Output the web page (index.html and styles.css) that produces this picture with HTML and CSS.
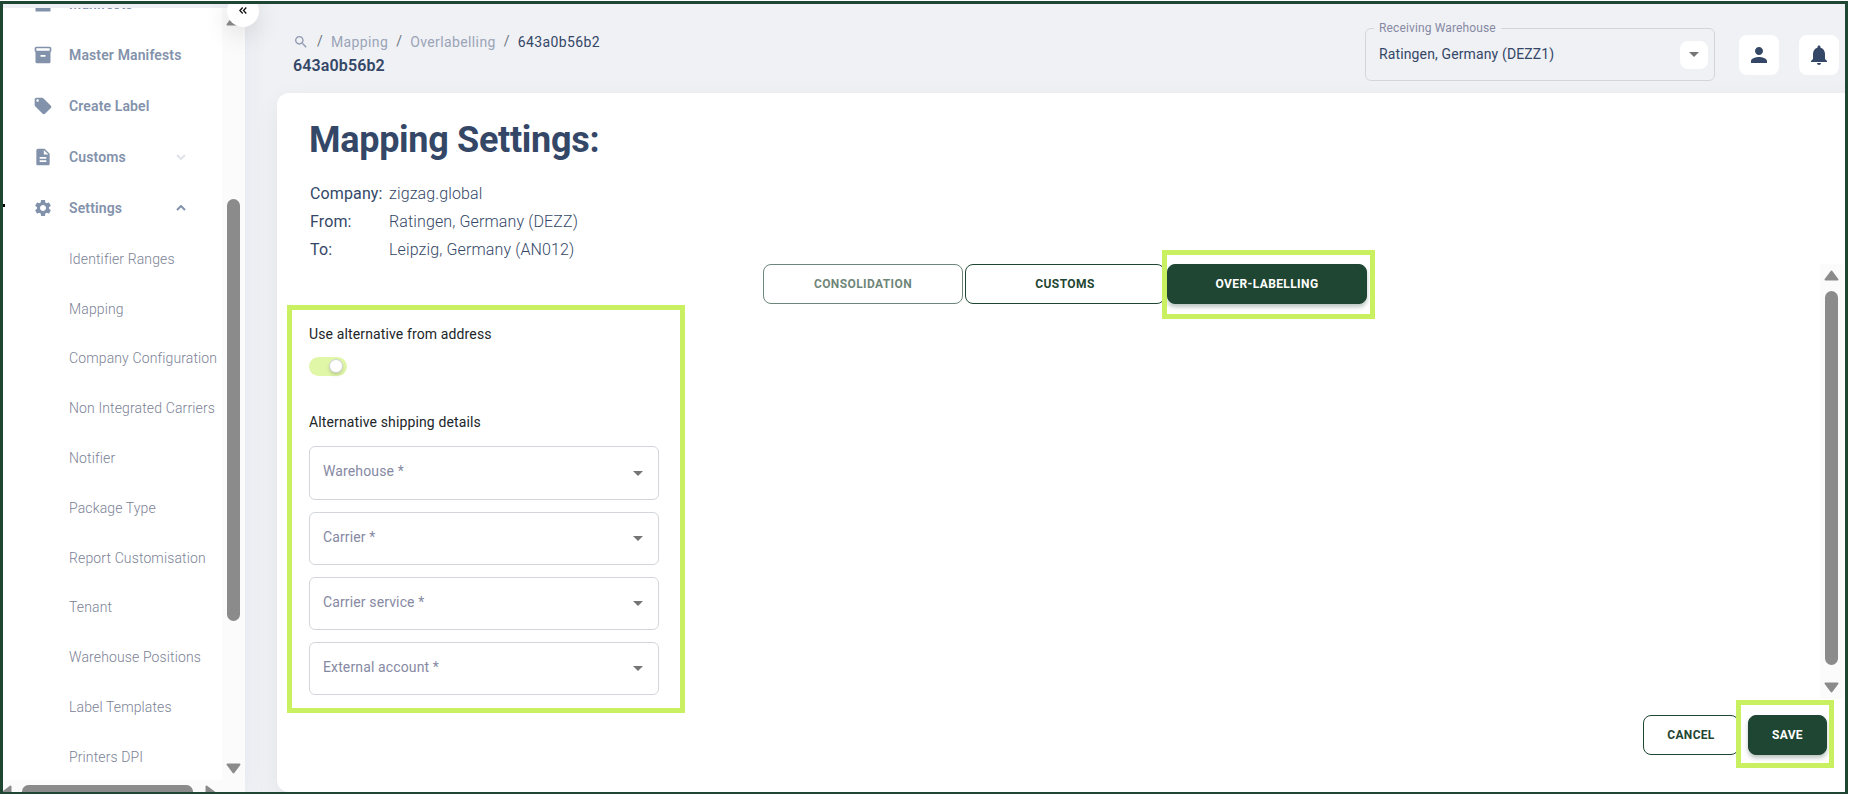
FILE: index.html
```html
<!DOCTYPE html>
<html lang="en">
<head>
    <meta charset="utf-8">
    <title>Mapping Settings</title>
    <link rel="stylesheet" href="styles.css">
</head>
<body>
    <div class="app">
        <aside class="sidebar">
            <div class="menu-area">
                <nav class="menu">
                    <a class="menu-item">
                        <svg class="menu-icon" viewBox="0 0 24 24"><path d="M4 3h16a1 1 0 0 1 1 1v16a1 1 0 0 1-1 1H4a1 1 0 0 1-1-1V4a1 1 0 0 1 1-1z"/></svg>
                        <span>Manifests</span>
                    </a>
                    <a class="menu-item">
                        <svg class="menu-icon" viewBox="0 0 24 24"><path fill-rule="evenodd" d="M20 2H4c-1 0-2 .9-2 2v3.01c0 .72.43 1.34 1 1.69V20c0 1.1 1.1 2 2 2h14c.9 0 2-.9 2-2V8.700c.57-.35 1-.97 1-1.690V4c0-1.100-1-2-2-2zm-5 12H9v-2h6v2zm5-7H4V4h16v3z"/></svg>
                        <span>Master Manifests</span>
                    </a>
                    <a class="menu-item">
                        <svg class="menu-icon" viewBox="0 0 24 24"><path d="M21.410 11.580l-9-9C12.050 2.220 11.550 2 11 2H4c-1.100 0-2 .9-2 2v7c0 .55.22 1.050.59 1.420l9 9c.36.36.86.58 1.410.58s1.050-.22 1.410-.59l7-7c.37-.36.59-.86.59-1.410s-.23-1.060-.59-1.420zM5.500 7C4.670 7 4 6.330 4 5.500S4.670 4 5.500 4 7 4.670 7 5.500 6.330 7 5.500 7z"/></svg>
                        <span>Create Label</span>
                    </a>
                    <a class="menu-item">
                        <svg class="menu-icon" viewBox="0 0 24 24"><path d="M14 2H6c-1.100 0-1.990.9-1.990 2L4 20c0 1.100.89 2 1.990 2H18c1.100 0 2-.9 2-2V8l-6-6zm2 16H8v-2h8v2zm0-4H8v-2h8v2zm-3-5V3.500L18.500 9H13z"/></svg>
                        <span>Customs</span>
                        <svg class="menu-arrow faded" viewBox="0 0 10 6"><path d="M1 1l4 4 4-4"/></svg>
                    </a>
                    <a class="menu-item">
                        <svg class="menu-icon" viewBox="0 0 24 24"><path d="M19.140 12.940c.04-.3.06-.61.06-.94 0-.32-.02-.64-.07-.94l2.030-1.580c.18-.14.23-.41.12-.61l-1.920-3.320c-.12-.22-.37-.29-.59-.22l-2.390.96c-.5-.38-1.030-.7-1.620-.94l-.36-2.540c-.04-.24-.24-.41-.48-.41h-3.840c-.24 0-.43.17-.47.41l-.36 2.540c-.59.24-1.130.57-1.620.94l-2.390-.96c-.22-.08-.47 0-.59.22L2.740 8.870c-.12.21-.08.47.12.61l2.030 1.580c-.05.3-.09.63-.09.94s.02.64.07.94l-2.030 1.580c-.18.14-.23.41-.12.61l1.920 3.320c.12.22.37.29.59.22l2.390-.96c.5.38 1.030.7 1.620.94l.36 2.540c.05.24.24.41.48.41h3.840c.24 0 .44-.17.47-.41l.36-2.540c.59-.24 1.130-.56 1.620-.94l2.390.96c.22.08.47 0 .59-.22l1.920-3.320c.12-.22.07-.47-.12-.61l-2.010-1.580zM12 15.600c-1.980 0-3.600-1.620-3.600-3.600s1.620-3.600 3.600-3.600 3.600 1.620 3.600 3.600-1.620 3.600-3.600 3.600z"/></svg>
                        <span>Settings</span>
                        <svg class="menu-arrow" viewBox="0 0 10 6"><path d="M1 5l4-4 4 4"/></svg>
                    </a>
                    <a class="submenu-item">Identifier Ranges</a>
                    <a class="submenu-item">Mapping</a>
                    <a class="submenu-item">Company Configuration</a>
                    <a class="submenu-item">Non Integrated Carriers</a>
                    <a class="submenu-item">Notifier</a>
                    <a class="submenu-item">Package Type</a>
                    <a class="submenu-item">Report Customisation</a>
                    <a class="submenu-item">Tenant</a>
                    <a class="submenu-item">Warehouse Positions</a>
                    <a class="submenu-item">Label Templates</a>
                    <a class="submenu-item">Printers DPI</a>
                </nav>
                <div class="scrollbar menu-scroll">
                    <svg class="scroll-arrow" viewBox="0 0 15 11"><path d="M7.500 1.500L13.500 9.500H1.500z"/></svg>
                    <div class="scroll-thumb"></div>
                    <svg class="scroll-arrow" viewBox="0 0 15 11"><path d="M7.500 9.500L13.500 1.500H1.500z"/></svg>
                </div>
            </div>
            <div class="menu-hscroll">
                <svg class="hscroll-arrow" viewBox="0 0 11 15"><path d="M1.500 7.500L9.500 1.500V13.500z"/></svg>
                <div class="hscroll-thumb"></div>
                <svg class="hscroll-arrow" viewBox="0 0 11 15"><path d="M9.500 7.500L1.500 1.500V13.500z"/></svg>
            </div>
        </aside>

        <div class="page">
            <header class="topbar">
                <div class="heading">
                    <div class="breadcrumbs">
                        <svg class="search-icon" viewBox="0 0 24 24"><path d="M15.500 14h-.79l-.28-.27C15.410 12.590 16 11.110 16 9.500 16 5.910 13.090 3 9.500 3S3 5.910 3 9.500 5.910 16 9.500 16c1.610 0 3.090-.59 4.230-1.570l.27.28v.79l5 4.990L20.490 19l-4.990-5zm-6 0C7.010 14 5 11.990 5 9.500S7.010 5 9.500 5 14 7.010 14 9.500 11.990 14 9.500 14z"/></svg>
                        <span class="slash">/</span>
                        <a>Mapping</a>
                        <span class="slash">/</span>
                        <a>Overlabelling</a>
                        <span class="slash">/</span>
                        <span class="current">643a0b56b2</span>
                    </div>
                    <div class="page-name">643a0b56b2</div>
                </div>
                <fieldset class="warehouse-select">
                    <legend>Receiving Warehouse</legend>
                    <span>Ratingen, Germany (DEZZ1)</span>
                    <button class="select-button"><svg class="caret" viewBox="0 0 10 5"><path d="M0 0h10L5 5z"/></svg></button>
                </fieldset>
                <button class="icon-button"><svg viewBox="0 0 24 24"><path d="M12 12c2.210 0 4-1.790 4-4s-1.790-4-4-4-4 1.790-4 4 1.790 4 4 4zm0 2c-2.670 0-8 1.340-8 4v2h16v-2c0-2.660-5.330-4-8-4z"/></svg></button>
                <button class="icon-button"><svg viewBox="0 0 24 24"><path d="M12 22c1.100 0 2-.9 2-2h-4c0 1.100.89 2 2 2zm6-6v-5c0-3.070-1.640-5.640-4.500-6.320V4c0-.83-.67-1.500-1.500-1.500s-1.500.67-1.500 1.500v.68C7.630 5.360 6 7.920 6 11v5l-2 2v1h16v-1l-2-2z"/></svg></button>
            </header>

            <main class="card">
                <h1>Mapping Settings:</h1>
                <dl class="details">
                    <dt>Company:</dt><dd>zigzag.global</dd>
                    <dt>From:</dt><dd>Ratingen, Germany (DEZZ)</dd>
                    <dt>To:</dt><dd>Leipzig, Germany (AN012)</dd>
                </dl>
                <div class="tabs">
                    <button class="btn tab muted">CONSOLIDATION</button>
                    <button class="btn tab">CUSTOMS</button>
                    <div class="tab-wrap">
                        <button class="btn tab filled">OVER-LABELLING</button>
                        <div class="highlight"></div>
                    </div>
                </div>
                <div class="content">
                    <section class="form-box">
                        <p class="form-label">Use alternative from address</p>
                        <div class="switch"><span class="knob"></span></div>
                        <p class="form-label details-label">Alternative shipping details</p>
                        <div class="field"><span>Warehouse *</span><svg class="caret" viewBox="0 0 10 5"><path d="M0 0h10L5 5z"/></svg></div>
                        <div class="field"><span>Carrier *</span><svg class="caret" viewBox="0 0 10 5"><path d="M0 0h10L5 5z"/></svg></div>
                        <div class="field"><span>Carrier service *</span><svg class="caret" viewBox="0 0 10 5"><path d="M0 0h10L5 5z"/></svg></div>
                        <div class="field"><span>External account *</span><svg class="caret" viewBox="0 0 10 5"><path d="M0 0h10L5 5z"/></svg></div>
                    </section>
                    <div class="scrollbar card-scroll">
                        <svg class="scroll-arrow" viewBox="0 0 15 11"><path d="M7.500 1.500L13.500 9.500H1.500z"/></svg>
                        <div class="scroll-thumb"></div>
                        <svg class="scroll-arrow" viewBox="0 0 15 11"><path d="M7.500 9.500L13.500 1.500H1.500z"/></svg>
                    </div>
                </div>
                <div class="actions">
                    <button class="btn cancel">CANCEL</button>
                    <div class="save-wrap">
                        <button class="btn save filled">SAVE</button>
                        <div class="highlight"></div>
                    </div>
                </div>
            </main>
        </div>
        <button class="collapse">
            <svg viewBox="0 0 8 7"><path d="M3.700.5L.9 3.500l2.800 3M7.300.5L4.500 3.500l2.800 3"/></svg>
        </button>
        <span class="tick"></span>
    </div>
</body>
</html>
```

FILE: styles.css
```css
* {
    box-sizing: border-box;
}

body {
    margin: 0;
    height: 794px;
    padding-top: 1px;
    overflow: hidden;
    background: #fff;
    font-family: Roboto, "Liberation Sans", sans-serif;
    font-size: 14px;
    letter-spacing: 0.13px;
    color: #344767;
}

button {
    font-family: inherit;
    padding: 0;
    border: none;
}

.app {
    position: relative;
    display: flex;
    width: 1848px;
    height: 794px;
    border: 3px solid #1f4632;
    background: #f0f1f5;
    overflow: hidden;
}

/* sidebar */
.sidebar {
    flex: none;
    display: flex;
    flex-direction: column;
    width: 242px;
    margin-top: 4px;
    background: #fff;
    box-shadow: 0 8px 26px rgba(60, 70, 100, 0.05);
}

.menu-area {
    flex: 1;
    display: flex;
    min-height: 0;
}

.menu {
    flex: 1;
    overflow: hidden;
}

.menu-item {
    display: flex;
    align-items: center;
    height: 51px;
    padding-left: 30px;
    font-weight: 600;
    color: #8392ab;
}

.menu-item:first-child {
    margin-top: -30px;
}

.menu-item span {
    width: 100px;
    margin-left: 16px;
    white-space: nowrap;
}

.menu-icon {
    flex: none;
    width: 20px;
    height: 20px;
    fill: #8392ab;
}

.menu-arrow {
    width: 10px;
    height: 6px;
    margin-left: 7px;
    fill: none;
    stroke: #8392ab;
    stroke-width: 2;
}

.menu-arrow.faded {
    stroke: #dfe3e9;
}

.submenu-item {
    display: flex;
    align-items: center;
    height: 49.8px;
    padding-left: 66px;
    font-weight: 300;
    color: #7b8296;
    white-space: nowrap;
}

.menu-item + .submenu-item {
    margin-top: 1px;
}

.scrollbar {
    flex: none;
    display: flex;
    flex-direction: column;
    align-items: center;
    width: 23px;
    background: #fbfbfb;
}

.scroll-arrow {
    flex: none;
    width: 15px;
    height: 11px;
    fill: #8b8b8b;
    stroke: #8b8b8b;
    stroke-width: 2;
    stroke-linejoin: round;
}

.scroll-thumb {
    width: 13px;
    border-radius: 7px;
    background: #8b8b8b;
}

.menu-scroll {
    padding-top: 7px;
}

.menu-scroll .scroll-thumb {
    height: 422px;
    margin: 173px 0 142px;
}

.menu-hscroll {
    display: flex;
    height: 12px;
    padding-top: 5px;
    background: #fbfbfb;
    overflow: hidden;
}

.hscroll-arrow {
    flex: none;
    width: 11px;
    height: 15px;
    margin-left: -2px;
    fill: #8b8b8b;
    stroke: #8b8b8b;
    stroke-width: 2;
    stroke-linejoin: round;
}

.hscroll-thumb {
    width: 171px;
    height: 13px;
    margin: 0 14px 0 10px;
    border-radius: 7px;
    background: #8b8b8b;
}

.collapse {
    position: absolute;
    left: 224px;
    top: -9px;
    display: flex;
    align-items: center;
    justify-content: center;
    width: 32px;
    height: 32px;
    border-radius: 50%;
    background: #fff;
    box-shadow: 0 8px 26px rgba(20, 20, 20, 0.12);
}

.collapse svg {
    width: 8px;
    height: 7px;
    margin-top: -1px;
    fill: none;
    stroke: #111;
    stroke-width: 1.3;
}

.tick {
    position: absolute;
    left: 0;
    top: 200px;
    width: 2px;
    height: 3px;
    background: #000;
}

/* header */
.page {
    flex: 1;
    display: flex;
    flex-direction: column;
    min-width: 0;
    padding-left: 32px;
}

.topbar {
    flex: none;
    display: flex;
    height: 89px;
    padding: 0 6px 0 16px;
}

.heading {
    flex: 1;
    padding-top: 27px;
}

.breadcrumbs {
    display: flex;
    align-items: center;
    height: 22px;
    letter-spacing: 0.38px;
    color: #9aa4b7;
}

.search-icon {
    width: 16px;
    height: 16px;
    fill: #8f9bb0;
}

.slash {
    width: 5px;
    margin: -3px 9px 0 8px;
    color: #6c757d;
}

.current {
    color: #344767;
}

.page-name {
    font-size: 16px;
    line-height: 24px;
    margin-top: 1px;
    font-weight: 600;
}

.warehouse-select {
    display: flex;
    align-items: center;
    width: 350px;
    height: 60px;
    margin: 17px 24px 0 0;
    padding: 0 6px 0 13px;
    border: 1px solid #d2d6da;
    border-radius: 6px;
}

.warehouse-select legend {
    margin-left: -5px;
    padding: 0 5px;
    font-size: 12px;
    line-height: 14px;
    color: #8689a3;
}

.warehouse-select span {
    flex: 1;
    margin-top: -8px;
}

.caret {
    width: 10px;
    height: 5px;
    fill: #757575;
}

.select-button {
    display: flex;
    align-items: center;
    justify-content: center;
    width: 28px;
    height: 28px;
    margin-top: -6px;
    border-radius: 8px;
    background: #fff;
}

.icon-button {
    display: flex;
    align-items: center;
    justify-content: center;
    width: 40px;
    height: 40px;
    margin: 31px 0 0;
    border-radius: 8px;
    background: #fff;
}

.icon-button + .icon-button {
    margin-left: 20px;
}

.icon-button svg {
    width: 24px;
    height: 24px;
    fill: #344767;
}

/* card */
.card {
    flex: 1;
    display: flex;
    flex-direction: column;
    margin-right: -20px;
    padding: 24px 22px 0 10px;
    border-radius: 12px;
    background: #fff;
    box-shadow: 0 8px 26px rgba(20, 20, 40, 0.06);
}

h1 {
    margin: 0 0 0 22px;
    font-size: 36px;
    line-height: 46px;
    font-weight: 700;
    letter-spacing: -0.3px;
}

.details {
    display: grid;
    grid-template-columns: 79px auto;
    margin: 17px 0 0 23px;
    font-size: 16px;
    line-height: 28px;
}

.details dd {
    margin: 0;
    font-weight: 300;
}

.tabs {
    display: flex;
    gap: 2px;
    margin: 0 0 0 476px;
}

.btn {
    height: 40px;
    border: 1px solid #1f4632;
    border-radius: 8px;
    background: #fff;
    color: #1f4632;
    font-size: 12px;
    font-weight: 700;
    letter-spacing: 0.3px;
}

.tab {
    width: 200px;
    letter-spacing: 0.4px;
}

.muted {
    opacity: 0.65;
}

.filled {
    background: #1f4632;
    color: #fff;
    box-shadow: 0 3px 4px rgba(31, 70, 50, 0.3);
}

.tab-wrap,
.save-wrap {
    position: relative;
}

.highlight {
    position: absolute;
    inset: -14px -8px -15px -5px;
    border: 5px solid #c8f060;
}

.content {
    display: flex;
    justify-content: space-between;
    height: 435px;
    margin-top: -40px;
}

.form-box {
    width: 398px;
    height: 408px;
    margin-top: 41px;
    padding: 16px 21px 0 17px;
    border: 5px solid #c8f060;
}

.form-label {
    margin: 0;
    line-height: 16px;
    color: #212529;
}

.switch {
    width: 38px;
    height: 19px;
    margin-top: 15px;
    padding: 3px 0 0 21px;
    border-radius: 10px;
    background: #e1f7a8;
}

.knob {
    display: block;
    width: 12px;
    height: 12px;
    border-radius: 50%;
    background: #fff;
    box-shadow: 0 0 0 1px #d2d6da, 0 2px 4px rgba(0, 0, 0, 0.25);
}

.details-label {
    margin: 38px 0 16px;
}

.field {
    display: flex;
    align-items: center;
    justify-content: space-between;
    width: 350px;
    height: 53px;
    margin-bottom: 12px;
    padding: 0 15px 0 13px;
    border: 1px solid #d2d6da;
    border-radius: 6px;
    color: #8689a3;
}

.details-label + .field {
    height: 54px;
}

.field span {
    margin-top: -4px;
}

.card-scroll {
    height: 435px;
    padding-top: 6px;
}

.card-scroll .scroll-thumb {
    height: 374px;
    margin: 10px 0 17px;
}

.actions {
    display: flex;
    gap: 9px;
    margin: 16px 0 0 1356px;
}

.cancel {
    width: 96px;
}

.save {
    width: 79px;
}

.save-wrap .highlight {
    inset: -15px -7px -13px -12px;
}
```
